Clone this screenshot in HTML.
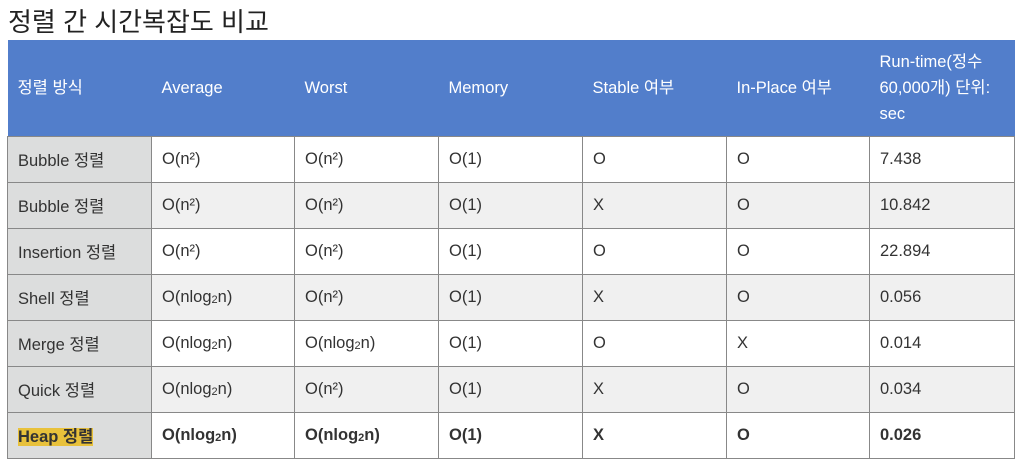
<!DOCTYPE html>
<html><head><meta charset="utf-8"><style>
body{margin:0;background:#fff;font-family:"Liberation Sans","Noto Sans CJK KR",sans-serif;color:#333;}
h1{position:absolute;left:8px;top:5px;margin:0;font-size:26px;font-weight:normal;color:#222;line-height:34px;}
table{position:absolute;left:7px;top:40px;border-collapse:collapse;table-layout:fixed;width:1007px;font-size:16.5px;}
th{background:#527ecb;color:#fff;font-weight:normal;text-align:left;height:96px;padding:0 10px;line-height:26px;box-sizing:border-box;}
td{border:1px solid #888;height:46px;padding:0 10px;box-sizing:border-box;}
td:first-child{background:#dcdddd;}
tr.e td{background:#f0f0f0;}
tr.e td:first-child{background:#dcdddd;}
tr.b td{font-weight:bold;}
.hl{background:#e8c13b;}
sub{font-size:11px;vertical-align:-1px;}
</style></head><body>
<h1>정렬 간 시간복잡도 비교</h1>
<table>
<colgroup><col style="width:144px"><col style="width:143px"><col style="width:144px"><col style="width:144px"><col style="width:144px"><col style="width:143px"><col style="width:145px"></colgroup>
<tr><th>정렬 방식</th><th>Average</th><th>Worst</th><th>Memory</th><th>Stable 여부</th><th>In-Place 여부</th><th>Run-time(정수 60,000개) 단위: sec</th></tr>
<tr><td>Bubble 정렬</td><td>O(n²)</td><td>O(n²)</td><td>O(1)</td><td>O</td><td>O</td><td>7.438</td></tr>
<tr class="e"><td>Bubble 정렬</td><td>O(n²)</td><td>O(n²)</td><td>O(1)</td><td>X</td><td>O</td><td>10.842</td></tr>
<tr><td>Insertion 정렬</td><td>O(n²)</td><td>O(n²)</td><td>O(1)</td><td>O</td><td>O</td><td>22.894</td></tr>
<tr class="e"><td>Shell 정렬</td><td>O(nlog<sub>2</sub>n)</td><td>O(n²)</td><td>O(1)</td><td>X</td><td>O</td><td>0.056</td></tr>
<tr><td>Merge 정렬</td><td>O(nlog<sub>2</sub>n)</td><td>O(nlog<sub>2</sub>n)</td><td>O(1)</td><td>O</td><td>X</td><td>0.014</td></tr>
<tr class="e"><td>Quick 정렬</td><td>O(nlog<sub>2</sub>n)</td><td>O(n²)</td><td>O(1)</td><td>X</td><td>O</td><td>0.034</td></tr>
<tr class="b"><td><span class="hl">Heap 정렬</span></td><td>O(nlog<sub>2</sub>n)</td><td>O(nlog<sub>2</sub>n)</td><td>O(1)</td><td>X</td><td>O</td><td>0.026</td></tr>
</table>
</body></html>
